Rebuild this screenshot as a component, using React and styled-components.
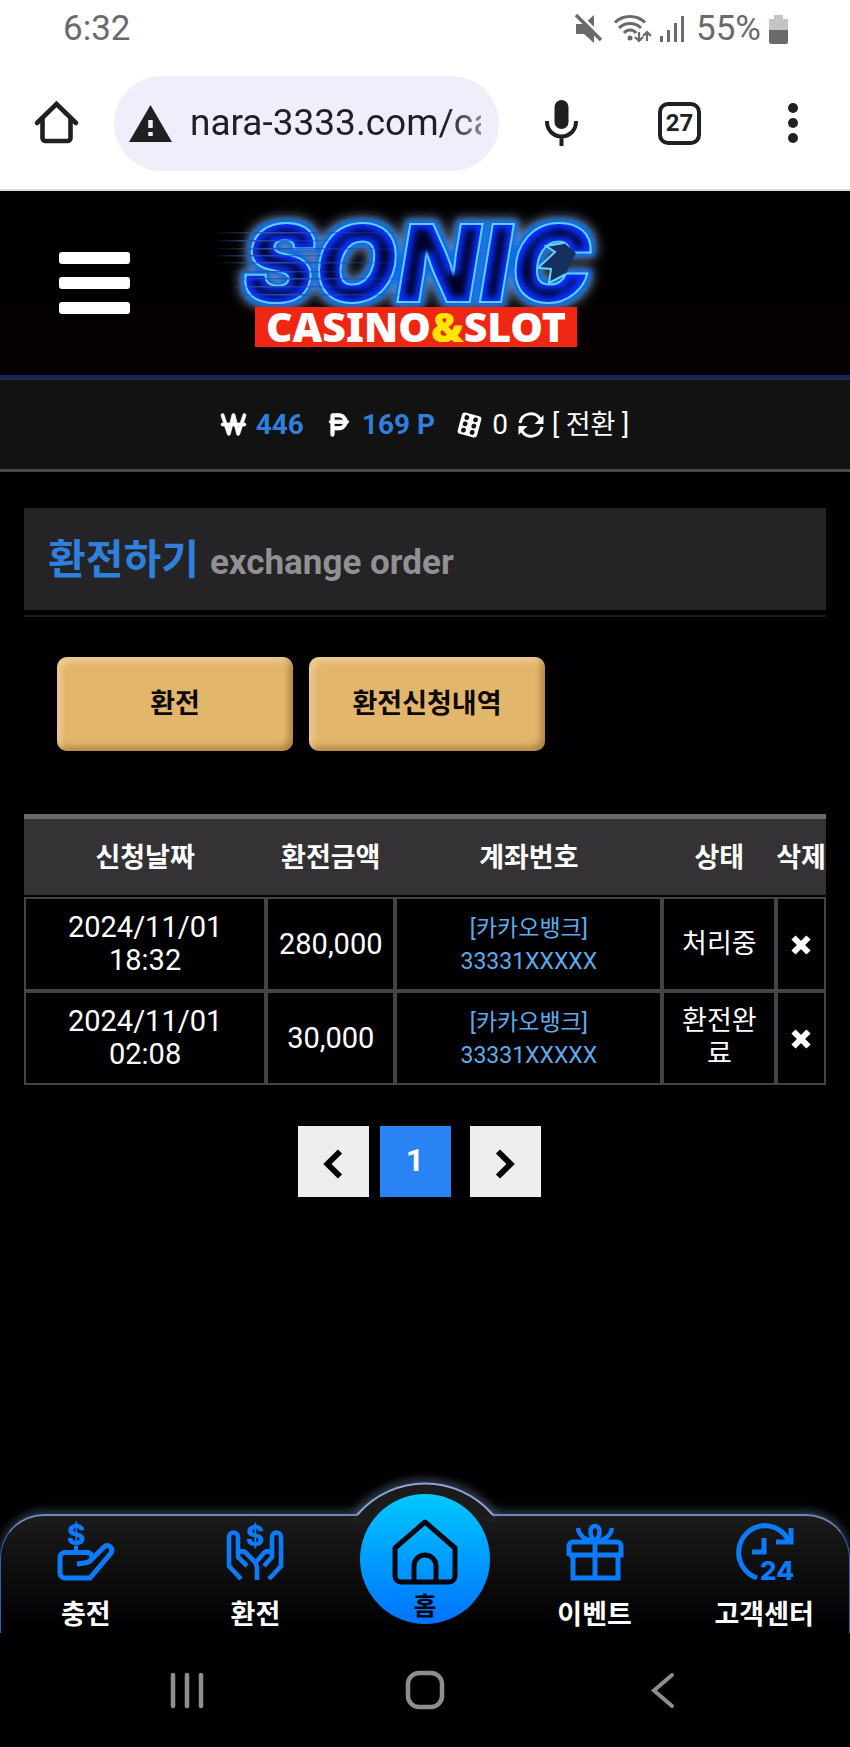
import React from 'react';
import styled, { createGlobalStyle, ThemeProvider } from 'styled-components';
import { FaWonSign, FaPesetaSign } from 'react-icons/fa6';

const theme = {
  colors: {
    chrome: '#ffffff',
    ink: '#202023',
    status: '#6a6a6a',
    pill: '#f0eefa',
    blue: '#2f7fdc',
    link: '#5daae8',
    icon: '#0c7bfa',
    gold: '#e2b66c',
    grid: '#444346',
    system: '#8f8d90',
  },
  space: { gutter: '24px' },
};

const GlobalStyle = createGlobalStyle`
  *, *::before, *::after {
    box-sizing: border-box;
  }

  body {
    margin: 0;
    background: #010002;
    color: #fff;
    font-family: Roboto, "Noto Sans CJK KR", sans-serif;
    font-size: 28px;
  }

  button, input {
    border: 0;
    color: inherit;
    font: inherit;
    margin: 0;
    padding: 0;
  }

  button {
    background: none;
    cursor: pointer;
  }

  a {
    color: inherit;
    text-decoration: none;
  }

  svg {
    display: block;
    flex-shrink: 0;
    overflow: visible;
  }
`;

const Page = styled.div`
  display: flex;
  flex-direction: column;
  min-height: 100vh;
  overflow: hidden;
`;

/* status bar and browser toolbar */

const StatusBar = styled.div`
  align-items: center;
  background: ${({ theme }) => theme.colors.chrome};
  color: ${({ theme }) => theme.colors.status};
  display: flex;
  font-size: 35px;
  justify-content: space-between;
  line-height: 40px;
  padding: 9px 62px 9px 63px;
`;

const StatusIcons = styled.div`
  align-items: center;
  display: flex;
  gap: 8px;
`;

const Toolbar = styled.div`
  align-items: center;
  background: ${({ theme }) => theme.colors.chrome};
  border-bottom: 2px solid #dcdcdc;
  color: ${({ theme }) => theme.colors.ink};
  display: flex;
  height: 133px;
  padding: 0 52px 1px 35px;
`;

const AddressPill = styled.label`
  align-items: center;
  background: ${({ theme }) => theme.colors.pill};
  border-radius: 48px;
  display: flex;
  flex: 1;
  gap: 18px;
  height: 95px;
  margin: 0 45px 0 36px;
  min-width: 0;
  padding: 0 18px 0 15px;
`;

const Address = styled.input`
  background: none;
  flex: 1;
  font-size: 37px;
  line-height: 48px;
  mask-image: linear-gradient(90deg, #000 88%, rgba(0, 0, 0, 0.5));
  min-width: 0;
  outline: 0;
`;

const TabCount = styled.button`
  border: 4px solid ${({ theme }) => theme.colors.ink};
  border-radius: 10px;
  font-size: 24px;
  font-weight: 700;
  height: 43px;
  line-height: 35px;
  margin: 0 87px 0 79px;
  width: 43px;
`;

/* site header */

const Header = styled.header`
  align-items: center;
  background: linear-gradient(#000, #000 40%, #090101);
  border-bottom: 3px solid #1b1f63;
  box-shadow: 0 2px 0 #1f2b38;
  display: grid;
  grid-template-columns: 1fr auto 1fr;
  height: 187px;
  margin-bottom: 2px;
`;

const MenuButton = styled.button`
  display: grid;
  gap: 13px;
  margin-left: 59px;
  width: 71px;

  span {
    background: #fff;
    border-radius: 3px;
    height: 12px;
  }
`;

const InfoBar = styled.div`
  align-items: center;
  background: #131213;
  border-bottom: 3px solid #4a494b;
  display: flex;
  font-size: 28px;
  height: 92px;
  justify-content: center;
  line-height: 36px;
`;

const Balance = styled.strong`
  color: ${({ theme }) => theme.colors.blue};
  margin: 0 22px 0 10px;
`;

const CasinoBalance = styled.span`
  margin: 0 10px;
`;

const ConvertButton = styled.button`
  font-size: 27px;
  line-height: 36px;
  margin-left: 8px;
`;

/* content */

const Main = styled.main`
  flex: 1;
  padding: 36px ${({ theme }) => theme.space.gutter} 40px;
`;

const TitleBar = styled.h1`
  align-items: baseline;
  background: #242325;
  color: ${({ theme }) => theme.colors.blue};
  display: flex;
  font-size: 41px;
  font-weight: 700;
  gap: 11px;
  line-height: 60px;
  margin: 0 0 5px;
  padding: 22px 24px 17px;

  small {
    color: #919092;
    font-size: 35px;
  }
`;

const Rule = styled.hr`
  background: #1d1c1e;
  border: 0;
  height: 2px;
  margin: 0;
`;

const Actions = styled.div`
  display: flex;
  gap: 16px;
  padding: 40px 33px 63px;
`;

const ActionButton = styled.button`
  background: ${({ theme }) => theme.colors.gold};
  border-radius: 10px;
  box-shadow: inset 4px 4px 6px rgba(255, 235, 205, 0.45), inset -4px -4px 6px rgba(110, 70, 20, 0.45);
  color: #0d0906;
  flex: 0 1 236px;
  font-size: 27px;
  font-weight: 700;
  height: 94px;
  padding-bottom: 5px;
`;

const OrderTable = styled.table`
  border-collapse: separate;
  border-spacing: 0;
  border-top: 5px solid #6a696c;
  table-layout: fixed;
  text-align: center;
  width: 100%;
`;

const Col = styled.col`
  width: ${({ $width }) => $width};
`;

const HeadCell = styled.th`
  background: #343235;
  border-bottom: 2px solid #010002;
  font-size: 27px;
  font-weight: 700;
  height: 78px;
  padding: 0 0 4px;
  white-space: nowrap;
`;

const Cell = styled.td`
  border: 2px solid ${({ theme }) => theme.colors.grid};
  font-size: ${({ $size }) => $size || '29px'};
  height: 94px;
  line-height: 33px;
  padding: 0 ${({ $pad }) => $pad || '0'};
  word-break: break-all;

  a {
    color: ${({ theme }) => theme.colors.link};
    display: block;
    padding-top: 2px;
  }
`;

const DeleteButton = styled.button`
  display: block;
  margin: 2px auto 0;
`;

const Pager = styled.nav`
  display: flex;
  gap: 11px;
  justify-content: center;
  padding: 41px 12px 0 0;
`;

const PageButton = styled.button`
  align-items: center;
  background: ${({ $current }) => ($current ? '#2a83f2' : '#efeeef')};
  color: ${({ $current }) => ($current ? '#fff' : '#000')};
  display: flex;
  font-size: 32px;
  font-weight: 700;
  height: 71px;
  justify-content: center;
  margin-right: ${({ $current }) => ($current ? '8px' : '0')};
  padding-bottom: ${({ $current }) => ($current ? '4px' : '0')};
  padding-top: ${({ $current }) => ($current ? '0' : '5px')};
  width: 71px;
`;

/* bottom navigation */

const TabBar = styled.nav`
  background: linear-gradient(#1b1b1b, #010002 95%);
  border: 1px solid #2c62b4;
  border-bottom: 0;
  border-radius: 44px 44px 0 0;
  border-top: 2px solid #7088b4;
  box-shadow: 0 -3px 10px rgba(120, 150, 190, 0.4);
  display: grid;
  grid-template-columns: repeat(5, 1fr);
  height: 119px;
  position: relative;
`;

const Bump = styled.svg`
  left: 50%;
  margin-left: -90px;
  position: absolute;
  top: -45px;
`;

const TabLink = styled.a`
  align-items: center;
  color: #fff;
  display: flex;
  flex-direction: column;
  font-size: 27px;
  font-weight: 700;
  gap: 15px;
  line-height: 38px;
  padding-top: 7px;
  white-space: nowrap;

  svg {
    color: ${({ theme }) => theme.colors.icon};
  }
`;

const HomeLink = styled.a`
  align-items: center;
  background: linear-gradient(#00c8ff, #0072ff);
  border-radius: 50%;
  color: #04060c;
  display: flex;
  flex-direction: column;
  font-size: 25px;
  font-weight: 700;
  gap: 6px;
  height: 130px;
  justify-self: center;
  line-height: 32px;
  margin-top: -22px;
  padding-top: 25px;
  position: relative;
  width: 130px;
`;

const SystemBar = styled.div`
  align-items: center;
  background: #010002;
  color: ${({ theme }) => theme.colors.system};
  display: flex;
  height: 114px;
  justify-content: space-between;
  padding: 0 168px;
  position: relative;
`;

/* icons */

const MuteIcon = () => (
  <svg width="32" height="30" viewBox="0 0 32 30" aria-hidden="true">
    <path d="M2 10h8l10-9v28l-10-9H2z" fill="currentColor" />
    <path d="M2 -3l27 27" stroke="#fff" strokeWidth="3" />
    <path d="M2 1l25 25" stroke="currentColor" strokeWidth="3.500" />
  </svg>
);

const WifiIcon = () => (
  <svg width="38" height="30" viewBox="0 0 38 30" fill="none" stroke="currentColor" strokeWidth="3" aria-hidden="true">
    <path d="M1 8.500c8-8 22-8 30 0M5 14c6-6 16-6 22 0M10 19c3-4 9-4 12 0" />
    <circle cx="16" cy="24" r="2.500" fill="currentColor" stroke="none" />
    <path d="M25 18v9m-4-4l4 4 4-4M33 27v-9m-4 4l4-4 4 4" strokeWidth="2.200" />
  </svg>
);

const SignalIcon = () => (
  <svg width="28" height="28" viewBox="0 0 28 28" fill="currentColor" aria-hidden="true">
    <rect x="0" y="21" width="3" height="6" />
    <rect x="7" y="15" width="3" height="12" />
    <rect x="14" y="8" width="3" height="19" />
    <rect x="21" y="1" width="3" height="26" />
  </svg>
);

const BatteryIcon = () => (
  <svg width="19" height="29" viewBox="0 0 19 29" aria-hidden="true">
    <path d="M5 0h9v4h5v12H0V4h5z" fill="#c4c4c4" />
    <path d="M0 15h19v12a2 2 0 0 1-2 2H2a2 2 0 0 1-2-2z" fill="currentColor" />
  </svg>
);

const BrowserHomeIcon = () => (
  <svg width="43" height="44" viewBox="0 0 43 44" fill="none" stroke="currentColor" strokeWidth="4.600" aria-hidden="true">
    <path d="M2 22L21.500 3 41 22" strokeLinecap="round" />
    <path d="M7.500 18v19a3 3 0 0 0 3 3h22a3 3 0 0 0 3-3V18" />
  </svg>
);

const WarningIcon = () => (
  <svg width="43" height="37" viewBox="0 0 43 37" aria-hidden="true">
    <path d="M21.500 0L43 37H0z" fill="currentColor" />
    <path d="M21.500 15v8M21.500 27v4" stroke="#f0eefa" strokeWidth="4.500" />
  </svg>
);

const MicIcon = () => (
  <svg width="35" height="46" viewBox="0 0 35 46" aria-hidden="true">
    <rect x="10.500" y="0" width="14" height="29" rx="7" fill="currentColor" />
    <path d="M3 21v1a14.500 14.500 0 0 0 29 0v-1M17.500 36v10" fill="none" stroke="currentColor" strokeWidth="4" />
  </svg>
);

const MoreIcon = () => (
  <svg width="10" height="40" viewBox="0 0 10 40" fill="currentColor" aria-hidden="true">
    <circle cx="5" cy="5" r="5" />
    <circle cx="5" cy="20" r="5" />
    <circle cx="5" cy="35" r="5" />
  </svg>
);

const DiceIcon = () => (
  <svg width="25" height="26" viewBox="0 0 25 26" aria-hidden="true">
    <g transform="rotate(15 12.500 13)">
      <rect x="2.500" y="2" width="20" height="22" rx="3" fill="#fff" />
      {[6.5, 13, 19.5].map(y => (
        <g key={y} fill="#131213">
          <circle cx="8" cy={y} r="2.400" />
          <circle cx="17" cy={y} r="2.400" />
        </g>
      ))}
    </g>
  </svg>
);

const RefreshIcon = () => (
  <svg width="26" height="26" viewBox="0 0 26 26" fill="none" stroke="#fff" strokeWidth="3" aria-hidden="true">
    <path d="M2 11C4 0 18-1 22 7M24 15C22 26 8 27 4 19" />
    <path d="M25.500 3v9h-9zM.5 23v-9h9z" fill="#fff" stroke="none" />
  </svg>
);

const CrossIcon = () => (
  <svg width="20" height="20" viewBox="0 0 20 20" stroke="#fff" strokeWidth="6" aria-hidden="true">
    <path d="M2.500 2.500l15 15M17.500 2.500l-15 15" />
  </svg>
);

const ChevronIcon = ({ right }) => (
  <svg width="20" height="30" viewBox="0 0 20 30" fill="none" stroke="currentColor" strokeWidth="6" aria-hidden="true">
    <path d={right ? 'M3 2.500L15.500 15 3 27.500' : 'M17 2.500L4.500 15 17 27.500'} />
  </svg>
);

const TabIcon = ({ children }) => (
  <svg width="58" height="58" viewBox="0 0 58 58" fill="none" stroke="currentColor" strokeWidth="5" aria-hidden="true">
    {children}
  </svg>
);

const IconText = styled.text`
  fill: currentColor;
  font-family: Inter, sans-serif;
  font-size: ${({ $size }) => $size};
  font-weight: 800;
  stroke: none;
`;

const DepositIcon = () => (
  <TabIcon>
    <IconText x="10" y="22" $size="28px">$</IconText>
    <path d="M19 23v6" strokeWidth="4" />
    <path d="M20 41c12-1 15-3 15-6.500 0-3-2-5-5-5H8a5 5 0 0 0-5 5V50a5 5 0 0 0 5 5h25l21-25c3-5-3-10-7-6L35 36" />
  </TabIcon>
);

const WithdrawIcon = () => (
  <TabIcon>
    <IconText x="20" y="23" $size="28px">$</IconText>
    <path d="M15 56L3 43V14c0-6 9-6 9 0v20l9 9M12 31c2-4 7-3 9 0l8 8 2 5v13" strokeWidth="4.600" />
    <path d="M43 56l12-13V14c0-6-9-6-9 0v20l-8 9M46 31c-2-4-7-3-9 0l-7 8" strokeWidth="4.600" />
  </TabIcon>
);

const GiftIcon = () => (
  <TabIcon>
    <path d="M7 33v22h45V33M29 19v36M3 33V23a4 4 0 0 1 4-4h44a4 4 0 0 1 4 4v9H3" />
    <path d="M29 18c-6-5-6-15 0-15s6 10 0 15c-9 0-16-5-17-13M29 18c9 0 16-5 17-13" strokeWidth="4.500" />
  </TabIcon>
);

const SupportIcon = () => (
  <TabIcon>
    <path d="M22 55A27 27 0 0 1 29 2.500c11 0 20 6 24.500 15" />
    <path d="M56 5v14H41M29 15v14H17" />
    <IconText x="25" y="57" $size="26px">24</IconText>
  </TabIcon>
);

const HomeIcon = () => (
  <svg width="66" height="66" viewBox="0 0 66 66" fill="none" stroke="currentColor" strokeWidth="5" strokeLinejoin="round" aria-hidden="true">
    <path d="M33 3L3 29v28a6 6 0 0 0 6 6h48a6 6 0 0 0 6-6V29z" />
    <path d="M22 63V47a11 11 0 0 1 22 0v16" />
  </svg>
);

const LogoText = styled.text`
  fill: #0a32ff;
  font-family: Inter, sans-serif;
  font-size: 107px;
  font-style: italic;
  font-weight: 900;
  stroke: #62d4ff;
  stroke-width: 2px;
`;

const LogoSub = styled.text`
  fill: #fff;
  font-family: "Noto Sans", sans-serif;
  font-size: 41px;
  font-weight: 900;
`;

const SPEED_LINES = [27, 35, 43, 50, 57, 66, 73, 81, 89];

const Logo = () => (
  <svg width="430" height="156" viewBox="0 0 430 156" role="img" aria-label="Sonic Casino & Slot">
    <defs>
      {/* neon: grey halo, blue rim, then the letters with a dark core */}
      <filter id="neon" filterUnits="userSpaceOnUse" x="0" y="-14" width="430" height="150" colorInterpolationFilters="sRGB">
        <feMorphology in="SourceAlpha" operator="dilate" radius="4" result="wide" />
        <feGaussianBlur in="wide" stdDeviation="6" result="wideBlur" />
        <feFlood floodColor="#7f97bd" />
        <feComposite in2="wideBlur" operator="in" result="halo" />
        <feMorphology in="SourceAlpha" operator="dilate" radius="3" result="rimShape" />
        <feGaussianBlur in="rimShape" stdDeviation="2" result="rimBlur" />
        <feFlood floodColor="#0a6ce6" />
        <feComposite in2="rimBlur" operator="in" result="rim" />
        <feMorphology in="SourceAlpha" operator="erode" radius="6" result="coreShape" />
        <feGaussianBlur in="coreShape" stdDeviation="3" result="coreBlur" />
        <feFlood floodColor="#00022a" />
        <feComposite in2="coreBlur" operator="in" result="core" />
        <feMerge>
          <feMergeNode in="halo" />
          <feMergeNode in="rim" />
          <feMergeNode in="SourceGraphic" />
          <feMergeNode in="core" />
        </feMerge>
      </filter>
      <linearGradient id="speed">
        <stop offset="0" stopColor="#37508c" stopOpacity="0" />
        <stop offset="0.300" stopColor="#37508c" />
        <stop offset="1" stopColor="#1638c0" stopOpacity="0.200" />
      </linearGradient>
    </defs>
    <LogoText x="33" y="97" filter="url(#neon)">SONIC</LogoText>
    {/* spines on the inside of the last letter */}
    <path d="M354 38l-18 3 9 6-17 16 13 1-2 14 17-9 4-9 6-12z" fill="#15305e" />
    <path d="M354 38l-18 3 9 6-17 16 13 1-2 14 17-9" fill="none" stroke="#62d4ff" strokeWidth="2" />
    {SPEED_LINES.map((y, i) => (
      <rect key={y} x={5 + (i > 4 ? 14 : 0)} y={y} width={i % 2 ? 120 : 180} height="1.500" fill="url(#speed)" />
    ))}
    <rect x="45" y="102" width="322" height="40" fill="#ef2613" />
    <LogoSub x="206" y="137" textAnchor="middle">
      CASINO<tspan fill="#ffe600">&amp;</tspan>SLOT
    </LogoSub>
  </svg>
);

const orders = [
  { id: 1, date: '2024/11/01', time: '18:32', amount: '280,000', bank: '[카카오뱅크]', account: '33331XXXXX', status: '처리중' },
  { id: 2, date: '2024/11/01', time: '02:08', amount: '30,000', bank: '[카카오뱅크]', account: '33331XXXXX', status: '환전완료' },
];

const App = () => (
  <ThemeProvider theme={theme}>
    <GlobalStyle />
    <Page>
      <StatusBar>
        <span>6:32</span>
        <StatusIcons>
          <MuteIcon />
          <WifiIcon />
          <SignalIcon />
          <span>55%</span>
          <BatteryIcon />
        </StatusIcons>
      </StatusBar>

      <Toolbar>
        <button type="button" aria-label="Home"><BrowserHomeIcon /></button>
        <AddressPill>
          <WarningIcon />
          <Address type="text" aria-label="Address" defaultValue="nara-3333.com/ca" />
        </AddressPill>
        <button type="button" aria-label="Voice search"><MicIcon /></button>
        <TabCount type="button">27</TabCount>
        <button type="button" aria-label="More"><MoreIcon /></button>
      </Toolbar>

      <Header>
        <MenuButton type="button" aria-label="메뉴"><span /><span /><span /></MenuButton>
        <a href="#home"><Logo /></a>
      </Header>

      <InfoBar>
        <FaWonSign size={25} stroke="#fff" strokeWidth={14} />
        <Balance>446</Balance>
        <FaPesetaSign size={26} stroke="#fff" strokeWidth={18} />
        <Balance>169 P</Balance>
        <DiceIcon />
        <CasinoBalance>0</CasinoBalance>
        <RefreshIcon />
        <ConvertButton type="button">[ 전환 ]</ConvertButton>
      </InfoBar>

      <Main>
        <TitleBar>환전하기 <small>exchange order</small></TitleBar>
        <Rule />

        <Actions>
          <ActionButton type="button">환전</ActionButton>
          <ActionButton type="button">환전신청내역</ActionButton>
        </Actions>

        <OrderTable>
          <colgroup>
            <Col $width="30.200%" />
            <Col $width="16.100%" />
            <Col $width="33.300%" />
            <Col $width="14.200%" />
            <Col $width="6.200%" />
          </colgroup>
          <thead>
            <tr>
              <HeadCell>신청날짜</HeadCell>
              <HeadCell>환전금액</HeadCell>
              <HeadCell>계좌번호</HeadCell>
              <HeadCell>상태</HeadCell>
              <HeadCell>삭제</HeadCell>
            </tr>
          </thead>
          <tbody>
            {orders.map(order => (
              <tr key={order.id}>
                <Cell>{order.date}<br />{order.time}</Cell>
                <Cell>{order.amount}</Cell>
                <Cell $size="23px"><a href="#account">{order.bank}<br />{order.account}</a></Cell>
                <Cell $size="27px" $pad="14px">{order.status}</Cell>
                <Cell><DeleteButton type="button" aria-label="삭제"><CrossIcon /></DeleteButton></Cell>
              </tr>
            ))}
          </tbody>
        </OrderTable>

        <Pager>
          <PageButton type="button" aria-label="이전"><ChevronIcon /></PageButton>
          <PageButton type="button" $current>1</PageButton>
          <PageButton type="button" aria-label="다음"><ChevronIcon right /></PageButton>
        </Pager>
      </Main>

      <TabBar>
        <Bump width="180" height="62" viewBox="0 0 180 62" aria-hidden="true">
          <defs>
            <filter id="glow" x="-20%" y="-60%" width="140%" height="220%"><feGaussianBlur stdDeviation="5" /></filter>
          </defs>
          <path d="M22 43C58 2 122 2 158 43" fill="none" stroke="#7f9cc4" strokeWidth="6" opacity="0.600" filter="url(#glow)" />
          <path d="M22 44C58 2 122 2 158 44V48H22z" fill="#1b1b1b" />
          <path d="M22 44C58 2 122 2 158 44" fill="none" stroke="#8ea4d8" strokeWidth="2" />
        </Bump>
        <TabLink href="#deposit"><DepositIcon />충전</TabLink>
        <TabLink href="#withdraw"><WithdrawIcon />환전</TabLink>
        <HomeLink href="#home"><HomeIcon />홈</HomeLink>
        <TabLink href="#event"><GiftIcon />이벤트</TabLink>
        <TabLink href="#support"><SupportIcon />고객센터</TabLink>
      </TabBar>

      <SystemBar>
        <button type="button" aria-label="Recents">
          <svg width="38" height="38" viewBox="0 0 38 38" stroke="currentColor" strokeWidth="4.500" strokeLinecap="round">
            <path d="M5 4v31M19 4v31M33 4v31" />
          </svg>
        </button>
        <button type="button" aria-label="Home">
          <svg width="40" height="40" viewBox="0 0 40 40" fill="none" stroke="currentColor" strokeWidth="4.500">
            <rect x="3" y="3" width="34" height="34" rx="11" />
          </svg>
        </button>
        <button type="button" aria-label="Back">
          <svg width="38" height="38" viewBox="0 0 38 38" fill="none" stroke="currentColor" strokeWidth="4" strokeLinecap="round">
            <path d="M28 4L10 19.500 28 35" />
          </svg>
        </button>
      </SystemBar>
    </Page>
  </ThemeProvider>
);

export default App;
